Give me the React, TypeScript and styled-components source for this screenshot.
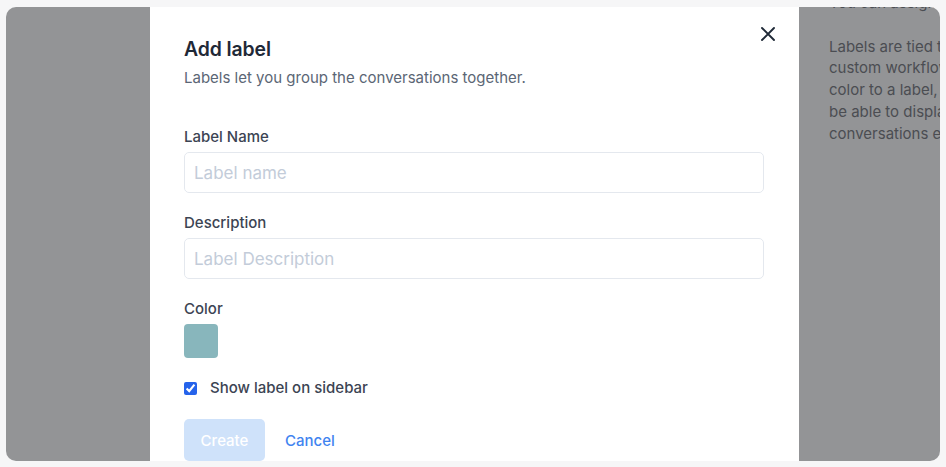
import React from "react";
import styled, { createGlobalStyle } from "styled-components";

const Global = createGlobalStyle`
  html, body { margin: 0; padding: 0; background: #f6f6f7; }
  body { font-family: Inter, "Noto Sans", sans-serif; -webkit-font-smoothing: antialiased; }
  * { box-sizing: border-box; }
`;

const Frame = styled.div`
  width: 946px;
  height: 467px;
  padding: 7px 6px 6px 6px;
`;

const Panel = styled.div`
  height: 454px;
  border-radius: 10px;
  overflow: hidden;
  background: #939496;
  display: grid;
  grid-template-columns: 144px 649px minmax(0, 1fr);
`;

const Modal = styled.div`
  grid-column: 2;
  background: #ffffff;
  padding: 30px 35px 0 34px;
  position: relative;
  display: flex;
  flex-direction: column;
`;

const Title = styled.h2`
  margin: 0;
  font-size: 19.4px;
  line-height: 24px;
  font-weight: 600;
  color: #1f2937;
  letter-spacing: -0.1px;
`;

const Subtitle = styled.p`
  margin: 7px 0 0 0;
  font-size: 15px;
  line-height: 20px;
  color: #5b6675;
`;

const Form = styled.div`
  margin-top: 39px;
  display: flex;
  flex-direction: column;
`;

const Field = styled.div`
  display: flex;
  flex-direction: column;
  margin-bottom: 20px;
`;

const Label = styled.label`
  font-size: 15px;
  line-height: 20px;
  font-weight: 500;
  color: #3c4453;
  margin-bottom: 5px;
`;

const Input = styled.input`
  height: 41px;
  width: 100%;
  border: 1px solid #e4e8ee;
  border-radius: 5px;
  padding: 0 9px;
  font-family: inherit;
  font-size: 17px;
  color: #1f2937;
  outline: none;
  &::placeholder { color: #c3ccd9; }
`;

const Swatch = styled.div<{ $color: string }>`
  width: 34px;
  height: 34px;
  border-radius: 4px;
  background: ${(p) => p.$color};
`;

const CheckRow = styled.label`
  display: flex;
  align-items: center;
  gap: 13px;
  font-size: 15px;
  line-height: 20px;
  font-weight: 500;
  color: #3c4453;
`;

const Checkbox = styled.input`
  margin: 0;
  width: 13px;
  height: 13px;
  accent-color: #2563eb;
`;

const Actions = styled.div`
  display: flex;
  align-items: center;
  gap: 20px;
  margin-top: 21px;
`;

const Button = styled.button<{ $variant: "primary" | "link" }>`
  font-family: inherit;
  font-size: 15px;
  font-weight: 500;
  height: 42px;
  border: none;
  border-radius: 5px;
  cursor: pointer;
  padding: ${(p) => (p.$variant === "primary" ? "0 16px" : "0")};
  min-width: ${(p) => (p.$variant === "primary" ? "81px" : "0")};
  background: ${(p) => (p.$variant === "primary" ? "#cfe2fa" : "transparent")};
  color: ${(p) => (p.$variant === "primary" ? "#ffffff" : "#3f84f0")};
`;

const Close = styled.button`
  position: absolute;
  top: 16px;
  right: 20px;
  width: 22px;
  height: 22px;
  padding: 0;
  border: none;
  background: transparent;
  display: flex;
  align-items: center;
  justify-content: center;
`;

const Side = styled.div`
  grid-column: 3;
  padding-left: 30px;
  margin-top: -15px;
  font-size: 15px;
  line-height: 21.75px;
  color: #4b4d52;
  white-space: nowrap;
  overflow: hidden;
`;

const Para = styled.p`
  margin: 0 0 21.75px 0;
`;

export default function App() {
  return (
    <>
      <Global />
      <Frame>
        <Panel>
          <Modal>
            <Close aria-label="Close">
              <svg width="16" height="16" viewBox="0 0 16 16" fill="none">
                <path d="M2 2L14 14M14 2L2 14" stroke="#1f2937" strokeWidth="1.9" strokeLinecap="round" />
              </svg>
            </Close>
            <Title>Add label</Title>
            <Subtitle>Labels let you group the conversations together.</Subtitle>
            <Form>
              <Field>
                <Label>Label Name</Label>
                <Input placeholder="Label name" />
              </Field>
              <Field>
                <Label>Description</Label>
                <Input placeholder="Label Description" />
              </Field>
              <Field>
                <Label>Color</Label>
                <Swatch $color="#88b6bc" />
              </Field>
              <CheckRow>
                <Checkbox type="checkbox" defaultChecked />
                Show label on sidebar
              </CheckRow>
              <Actions>
                <Button $variant="primary">Create</Button>
                <Button $variant="link">Cancel</Button>
              </Actions>
            </Form>
          </Modal>
          <Side>
            <Para>You can assign a label to a conversation.</Para>
            <Para>
              Labels are tied to conversations and
              <br />
              custom workflows. If you assign a
              <br />
              color to a label, you will
              <br />
              be able to display labels in
              <br />
              conversations easily.
            </Para>
          </Side>
        </Panel>
      </Frame>
    </>
  );
}
